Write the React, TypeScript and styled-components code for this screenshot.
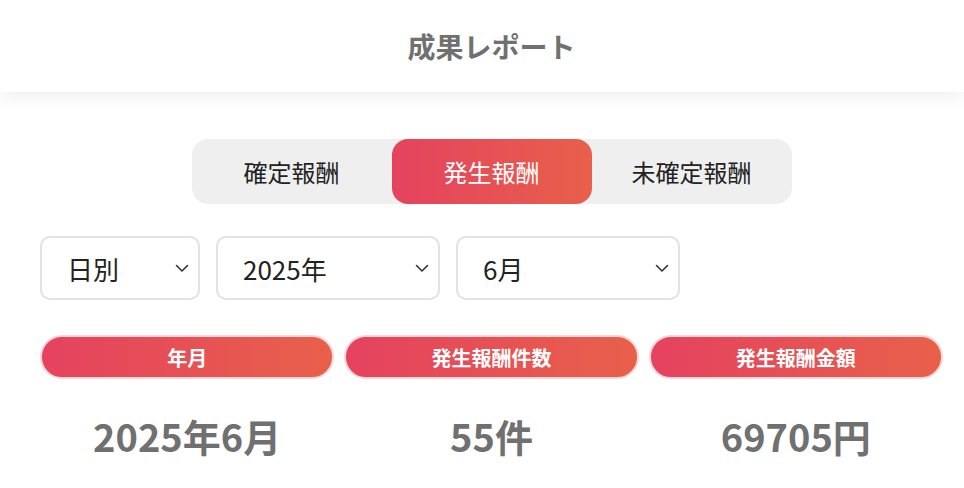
import React, { useState } from "react";
import styled, { createGlobalStyle } from "styled-components";

const GlobalStyle = createGlobalStyle`
  html, body {
    margin: 0;
    padding: 0;
    background: #fff;
    font-family: "Noto Sans CJK JP", "Noto Sans", sans-serif;
  }
`;

const Page = styled.div`
  width: 964px;
  min-height: 488px;
  background: #fff;
  overflow: hidden;
`;

const Header = styled.header`
  height: 92px;
  display: flex;
  align-items: center;
  justify-content: center;
  padding: 0 21px 0 40px;
  background: #fff;
  box-shadow: 0 6px 16px rgba(0, 0, 0, 0.06);
  position: relative;
  z-index: 1;
`;

const HeaderTitle = styled.h1`
  margin: 0;
  font-size: 28px;
  font-weight: 700;
  color: #707070;
`;

const Main = styled.main`
  display: flex;
  flex-direction: column;
  padding: 47px 21px 0 40px;
`;

const Tabs = styled.div`
  align-self: center;
  display: flex;
  width: 600px;
  height: 65px;
  background: #efefef;
  border-radius: 16px;
`;

const Tab = styled.button<{ $active?: boolean }>`
  flex: 1;
  border: none;
  border-radius: 16px;
  font-family: inherit;
  font-size: 24px;
  cursor: pointer;
  color: ${(p) => (p.$active ? "#fff" : "#222")};
  background: ${(p) =>
    p.$active ? "linear-gradient(90deg, #e5425f 0%, #e8604a 100%)" : "transparent"};
`;

const Filters = styled.div`
  display: flex;
  gap: 16px;
  margin-top: 32px;
`;

const SelectBox = styled.div<{ $width: number }>`
  width: ${(p) => p.$width}px;
  height: 64px;
  box-sizing: border-box;
  border: 2px solid #e2e2e2;
  border-radius: 10px;
  display: flex;
  align-items: center;
  justify-content: space-between;
  padding: 0 9px 0 25px;
  font-size: 26px;
  color: #222;
`;

const Chevron = () => (
  <svg width="14" height="9" viewBox="0 0 14 9" fill="none">
    <path d="M1.5 1.5L7 7L12.5 1.5" stroke="#333" strokeWidth="1.6" strokeLinecap="round" strokeLinejoin="round" />
  </svg>
);

const Stats = styled.div`
  display: grid;
  grid-template-columns: repeat(3, 1fr);
  column-gap: 10px;
  margin-top: 35px;
`;

const Pill = styled.div`
  height: 44px;
  box-sizing: border-box;
  border: 2px solid #f6d6d6;
  border-radius: 22px;
  background: linear-gradient(90deg, #e5425f 0%, #e8604a 100%);
  display: flex;
  align-items: center;
  justify-content: center;
  color: #fff;
  font-size: 20px;
  font-weight: 700;
`;

const Value = styled.div`
  text-align: center;
  font-size: 38px;
  font-weight: 700;
  color: #707070;
  margin-top: 34px;
  line-height: 1.2;
`;

const tabs = ["確定報酬", "発生報酬", "未確定報酬"];

const stats = [
  { label: "年月", value: "2025年6月" },
  { label: "発生報酬件数", value: "55件" },
  { label: "発生報酬金額", value: "69705円" },
];

export default function App() {
  const [active, setActive] = useState(1);

  return (
    <Page>
      <GlobalStyle />
      <Header>
        <HeaderTitle>成果レポート</HeaderTitle>
      </Header>
      <Main>
        <Tabs>
          {tabs.map((t, i) => (
            <Tab key={t} $active={i === active} onClick={() => setActive(i)}>
              {t}
            </Tab>
          ))}
        </Tabs>
        <Filters>
          <SelectBox $width={160}>
            日別
            <Chevron />
          </SelectBox>
          <SelectBox $width={224}>
            2025年
            <Chevron />
          </SelectBox>
          <SelectBox $width={224}>
            6月
            <Chevron />
          </SelectBox>
        </Filters>
        <Stats>
          {stats.map((s) => (
            <Pill key={s.label}>{s.label}</Pill>
          ))}
          {stats.map((s) => (
            <Value key={s.value}>{s.value}</Value>
          ))}
        </Stats>
      </Main>
    </Page>
  );
}
